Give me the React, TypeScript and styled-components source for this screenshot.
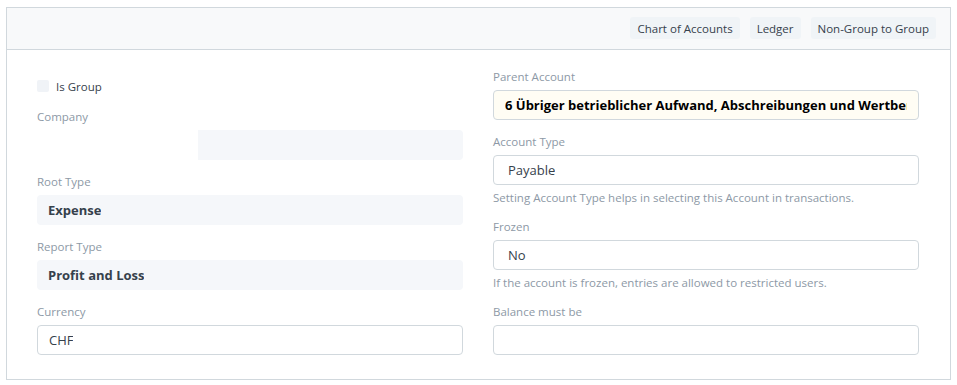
import React from 'react';
import styled, { createGlobalStyle } from 'styled-components';

const GlobalStyle = createGlobalStyle`
  body {
    margin: 0;
    background: #fff;
    font-family: 'Open Sans', 'Noto Sans', sans-serif;
    color: #36414c;
  }
`;

interface FieldProps {
  label: string;
  value?: string;
  variant?: 'readonly' | 'input' | 'link' | 'select';
  bold?: boolean;
  description?: string;
}

const Field: React.FC<FieldProps> = ({ label, value, variant = 'input', bold, description }) => (
  <FieldWrap>
    <Label>{label}</Label>
    <Control $variant={variant} $bold={bold}>
      <ControlText>{value}</ControlText>
    </Control>
    {description && <Description>{description}</Description>}
  </FieldWrap>
);

const App: React.FC = () => {
  return (
    <>
      <GlobalStyle />
      <Card>
        <Header>
          <HeaderButton>Chart of Accounts</HeaderButton>
          <HeaderButton>Ledger</HeaderButton>
          <HeaderButton>Non-Group to Group</HeaderButton>
        </Header>
        <Body>
          <Column>
            <CheckRow>
              <CheckBox />
              <CheckLabel>Is Group</CheckLabel>
            </CheckRow>
            <RedactedField>
              <Field label="Company" variant="readonly" />
              <Redaction />
            </RedactedField>
            <Field label="Root Type" value="Expense" variant="readonly" bold />
            <Field label="Report Type" value="Profit and Loss" variant="readonly" bold />
            <Field label="Currency" value="CHF" variant="input" />
          </Column>
          <Column>
            <Field
              label="Parent Account"
              value="6 Übriger betrieblicher Aufwand, Abschreibungen und Wertberichtigungen"
              variant="link"
              bold
            />
            <Field
              label="Account Type"
              value="Payable"
              variant="select"
              description="Setting Account Type helps in selecting this Account in transactions."
            />
            <Field
              label="Frozen"
              value="No"
              variant="select"
              description="If the account is frozen, entries are allowed to restricted users."
            />
            <Field label="Balance must be" value="" variant="select" />
          </Column>
        </Body>
      </Card>
    </>
  );
};

export default App;

//#region styled-components
const Card = styled.div`
  margin: 7px 0 0 6px;
  width: 945px;
  box-sizing: border-box;
  border: 1px solid #d1d8dd;
`;

const Header = styled.div`
  height: 42px;
  box-sizing: border-box;
  background: #f8f9fa;
  border-bottom: 1px solid #d1d8dd;
  display: flex;
  align-items: center;
  justify-content: flex-end;
  gap: 10px;
  padding: 0 14px 1px 0;
`;

const HeaderButton = styled.button`
  height: 22px;
  padding: 0 7px;
  border: none;
  border-radius: 3px;
  background: #f0f4f7;
  color: #36414c;
  font-family: inherit;
  font-size: 11.5px;
`;

const Body = styled.div`
  display: grid;
  grid-template-columns: 426px 426px;
  gap: 30px;
  padding: 17px 30px 24px;
`;

const Column = styled.div`
  display: flex;
  flex-direction: column;
  gap: 12px;
`;

const CheckRow = styled.div`
  display: flex;
  align-items: center;
  height: 18px;
  margin-top: 10px;
  gap: 7px;
`;

const CheckBox = styled.span`
  width: 12px;
  height: 12px;
  border-radius: 2px;
  background: #f0f3f7;
`;

const CheckLabel = styled.span`
  font-size: 11.5px;
  color: #36414c;
`;

const FieldWrap = styled.div`
  display: flex;
  flex-direction: column;
`;

const Label = styled.div`
  font-size: 11.5px;
  line-height: 18px;
  padding-top: 1px;
  color: #8d99a6;
  margin-bottom: 4px;
`;

const Control = styled.div<{ $variant: string; $bold?: boolean }>`
  height: 30px;
  box-sizing: border-box;
  border-radius: 4px;
  display: flex;
  align-items: center;
  padding: 0 ${(p) => (p.$variant === 'select' ? '14px' : '11px')};
  font-size: 13px;
  font-weight: ${(p) => (p.$bold ? 700 : 400)};
  color: ${(p) => (p.$variant === 'link' ? '#000' : '#36414c')};
  background: ${(p) =>
    p.$variant === 'readonly' ? '#f5f7fa' : p.$variant === 'link' ? '#fffdf4' : '#fff'};
  border: ${(p) => (p.$variant === 'readonly' ? 'none' : '1px solid #d1d8dd')};
  overflow: hidden;
`;

const ControlText = styled.span`
  white-space: nowrap;
  overflow: hidden;
`;

const Description = styled.div`
  font-size: 11.5px;
  line-height: 18px;
  margin-top: 4px;
  margin-bottom: -2px;
  color: #8d99a6;
`;

const RedactedField = styled.div`
  position: relative;
`;

const Redaction = styled.div`
  position: absolute;
  left: 0;
  top: 23px;
  width: 161px;
  height: 30px;
  background: #fff;
`;
//#endregion
